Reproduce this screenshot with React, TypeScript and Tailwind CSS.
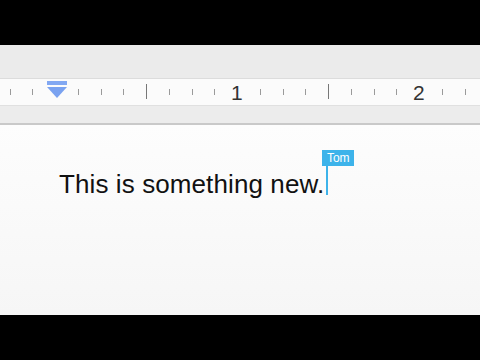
import React from "react";

export default function App() {
  const ticks: { x: number; kind: "s" | "m" }[] = [];
  const unit = 182 / 8;
  const origin = 237 - 182;
  for (let i = -2; i <= 18; i++) {
    const x = origin + i * unit;
    if (i === 0 || i === 8 || i === 16) continue;
    if (x < 5 || x > 475) continue;
    if (Math.abs(x - 57) < 6) continue;
    ticks.push({ x, kind: i % 4 === 0 ? "m" : "s" });
  }
  return (
    <div className="w-[480px] h-[360px] bg-black flex flex-col overflow-hidden" style={{ fontFamily: '"Liberation Sans", Arial, sans-serif' }}>
      <div className="h-[45px] bg-black" />
      <div className="h-[33px] bg-[#ebebeb]" />
      <div className="relative h-[28px] bg-[#fbfbfb] border-t border-[#dcdcdc] border-b border-b-[#e0e0e0]">
        {ticks.map((t, i) => (
          <div
            key={i}
            className={t.kind === "m" ? "absolute w-px h-[15px] top-[5px] bg-[#777]" : "absolute w-px h-[6px] top-[10px] bg-[#9a9a9a]"}
            style={{ left: Math.round(t.x) }}
          />
        ))}
        <div className="absolute left-[231px] top-[2px] text-[21px] leading-[24px] text-[#333]">1</div>
        <div className="absolute left-[413px] top-[2px] text-[21px] leading-[24px] text-[#333]">2</div>
        <div className="absolute left-[47px] top-[2px] w-[20px] h-[4px] bg-[#82a8f2]" />
        <svg className="absolute left-[47px] top-[8px]" width="20" height="11" viewBox="0 0 20 11">
          <polygon points="0,0 20,0 10,11" fill="#7aa2f0" />
        </svg>
      </div>
      <div className="h-[19px] bg-[#ececec] border-b-2 border-[#c9c9c9]" />
      <div className="flex-1 bg-gradient-to-b from-[#fdfdfd] to-[#f6f6f6] pl-[59px] pt-[41px]">
        <div className="flex items-end text-[26px] leading-[32px] text-[#111]">
          <span className="tracking-[0.1px]">This is something new.</span>
          <span className="relative ml-[2px] mb-[5px] w-[2px] h-[29px] bg-[#3db3ea]">
            <span className="absolute left-[-4px] top-[-16px] h-[16px] w-[32px] text-center bg-[#3db3ea] text-white text-[12px] leading-[16px]">
              Tom
            </span>
          </span>
        </div>
      </div>
      <div className="h-[45px] bg-black" />
    </div>
  );
}
